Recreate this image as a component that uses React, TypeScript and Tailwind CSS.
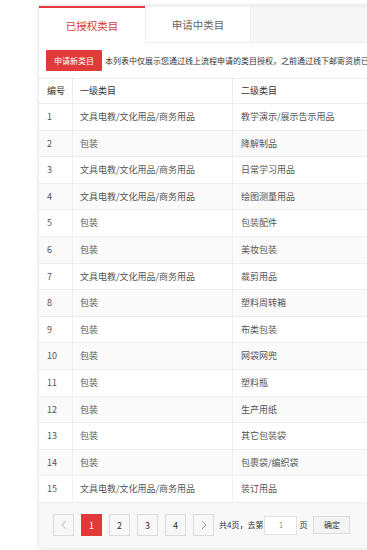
const rows: [number, string, string][] = [
  [1, '文具电教/文化用品/商务用品', '教学演示/展示告示用品'],
  [2, '包装', '降解制品'],
  [3, '文具电教/文化用品/商务用品', '日常学习用品'],
  [4, '文具电教/文化用品/商务用品', '绘图测量用品'],
  [5, '包装', '包装配件'],
  [6, '包装', '美妆包装'],
  [7, '文具电教/文化用品/商务用品', '裁剪用品'],
  [8, '包装', '塑料周转箱'],
  [9, '包装', '布类包装'],
  [10, '包装', '网袋网兜'],
  [11, '包装', '塑料瓶'],
  [12, '包装', '生产用纸'],
  [13, '包装', '其它包装袋'],
  [14, '包装', '包裹袋/编织袋'],
  [15, '文具电教/文化用品/商务用品', '装订用品'],
];

function PageBtn({ children, active }: { children: React.ReactNode; active?: boolean }) {
  return (
    <div
      className={
        active
          ? 'flex h-[22px] w-[21px] items-center justify-center border border-[#e23a3a] bg-[#e23a3a] text-[9px] text-white'
          : 'flex h-[22px] w-[21px] items-center justify-center border border-[#dcdcdc] bg-[#f7f7f7] text-[9px] text-[#333]'
      }
    >
      {children}
    </div>
  );
}

export default function App() {
  return (
    <div
      className="h-[550px] w-[367px] overflow-hidden bg-white"
      style={{ fontFamily: '"Noto Sans CJK SC", "Noto Sans", sans-serif' }}
    >
      <div className="ml-[39px] mt-[6px] w-[360px] bg-white shadow-[0_0_4px_rgba(0,0,0,0.18)]">
        {/* tabs */}
        <div className="flex h-[37px]">
          <div className="flex w-[106px] items-center justify-center border-t-2 border-[#e23a3a] bg-white text-[10.5px] text-[#d9363a]">
            已授权类目
          </div>
          <div className="flex w-[106px] items-center justify-center border border-b-[#eeeeee] border-[#f0f0f0] bg-white text-[10.5px] text-[#666]">
            申请中类目
          </div>
          <div className="flex-1 border-b border-t border-[#eeeeee] bg-[#f6f6f6]" />
        </div>

        {/* toolbar */}
        <div className="flex h-[35px] items-center gap-[3px] overflow-hidden whitespace-nowrap pl-[7px]">
          <div className="flex h-[21px] w-[56px] shrink-0 items-center justify-center rounded-[1px] bg-[#e23a3a] text-[8px] text-white">
            申请新类目
          </div>
          <span className="text-[8px] text-[#333]">
            本列表中仅展示您通过线上流程申请的类目授权，之前通过线下邮寄资质已
          </span>
        </div>

        {/* table */}
        <div className="text-[9px]">
          <div className="grid h-[26px] grid-cols-[34px_160px_1fr] border-y border-[#ececec] text-[#333]">
            <div className="flex items-center border-r border-[#ececec] pl-[8px]">编号</div>
            <div className="flex items-center border-r border-[#ececec] pl-[7px]">一级类目</div>
            <div className="flex items-center pl-[8px]">二级类目</div>
          </div>
          {rows.map(([n, a, b]) => (
            <div
              key={n}
              className={
                'grid h-[26.6px] grid-cols-[34px_160px_1fr] border-b border-[#efefef] text-[#555] ' +
                (n % 2 === 0 ? 'bg-[#fafafa]' : 'bg-white')
              }
            >
              <div className="flex items-center border-r border-[#efefef] pl-[8px]">{n}</div>
              <div className="flex items-center border-r border-[#efefef] pl-[7px]">{a}</div>
              <div className="flex items-center pl-[8px]">{b}</div>
            </div>
          ))}
        </div>

        {/* pagination */}
        <div className="flex h-[45px] items-center bg-[#f8f8f8] pl-[14px] text-[8px] text-[#333]">
          <div className="flex gap-[7px]">
            <PageBtn>
              <svg width="6" height="10" viewBox="0 0 6 10" fill="none" stroke="#bbb" strokeWidth="1">
                <path d="M5 1 1 5l4 4" />
              </svg>
            </PageBtn>
            <PageBtn active>1</PageBtn>
            <PageBtn>2</PageBtn>
            <PageBtn>3</PageBtn>
            <PageBtn>4</PageBtn>
            <PageBtn>
              <svg width="6" height="10" viewBox="0 0 6 10" fill="none" stroke="#999" strokeWidth="1">
                <path d="M1 1l4 4-4 4" />
              </svg>
            </PageBtn>
          </div>
          <span className="ml-[5px]">共4页，去第</span>
          <div className="ml-[1px] flex h-[19px] w-[33px] items-center justify-center border border-[#e2e2e2] bg-white text-[8px] text-[#999]">
            1
          </div>
          <span className="ml-[2px]">页</span>
          <div className="ml-[6px] flex h-[18px] w-[37px] items-center justify-center border border-[#dcdcdc] bg-[#f4f4f4] text-[8px] text-[#333]">
            确定
          </div>
        </div>
      </div>
    </div>
  );
}
